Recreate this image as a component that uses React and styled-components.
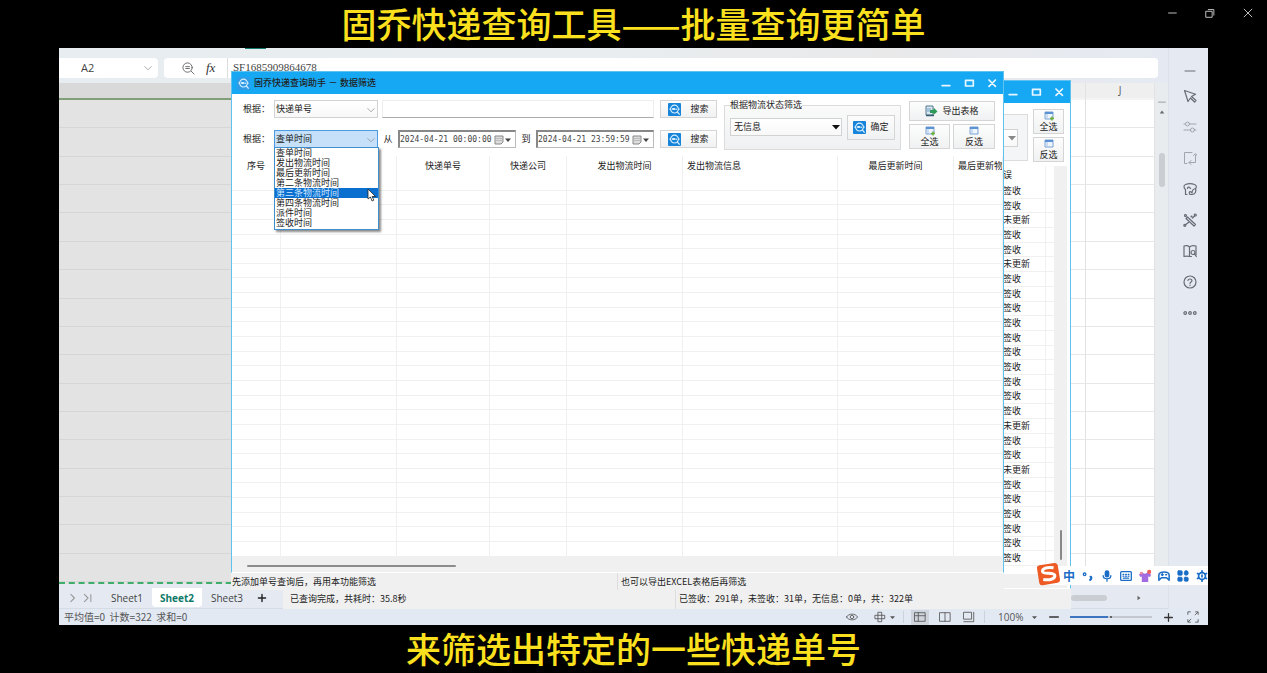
import React from "react";
import styled, { createGlobalStyle, css } from "styled-components";

const cjk = `"Liberation Sans", "Noto Sans CJK SC", sans-serif`;
const ui = `"Noto Sans CJK SC", sans-serif`;
const blue = "#16a8f3";

const GlobalStyle = createGlobalStyle`
  *, *::before, *::after { box-sizing: border-box; }
  body { margin: 0; background: #000; font-family: ${ui}; font-size: 9px; color: #222; }
  button, input, select { font: inherit; color: inherit; margin: 0; border-radius: 0; outline: none; }
  svg { display: block; flex: none; }
`;

/* ---------- player frame ---------- */
const Page = styled.main`
  display: grid;
  grid-template-rows: 48px 1fr 48px;
  min-height: 100vh;
`;
const Caption = styled.h1`
  margin: 0;
  display: flex;
  align-items: center;
  justify-content: center;
  color: #fbe01e;
  font: 500 35px/46px ${ui};
  height: 46px;
  white-space: nowrap;
`;
const PlayerTop = styled.header`
  position: relative;
`;
const PlayerControls = styled.div`
  position: absolute;
  top: 7px;
  right: 13px;
  display: flex;
  gap: 26px;
`;
const BareButton = styled.button`
  display: grid;
  place-items: center;
  width: ${(p) => p.$size || 12}px;
  height: ${(p) => p.$size || 12}px;
  padding: 0;
  border: 0;
  background: transparent;
  color: ${(p) => p.$color || "inherit"};
`;
const Stage = styled.section`
  position: relative;
  margin: 0 59px;
  overflow: hidden;
  display: flex;
  background: #e5eaf2;
`;

/* ---------- spreadsheet ---------- */
const Sheet = styled.div`
  flex: 1;
  min-width: 0;
  display: flex;
  flex-direction: column;
`;
const SheetMain = styled.div`
  flex: 1;
  display: flex;
  min-height: 0;
`;
const SheetBody = styled.div`
  flex: 1;
  min-width: 0;
  display: flex;
  flex-direction: column;
`;
const FormulaRow = styled.div`
  display: flex;
  gap: 6px;
  height: 35px;
  padding: 10px 10px 5px 0;
  background: linear-gradient(90deg, #e7edf0, #e9edef 50%, #e9e9ea 75%, #e5eaf2);
`;
const NameBox = styled.div`
  display: flex;
  align-items: center;
  width: 99px;
  padding: 0 5px 0 22px;
  background: #fff;
  border-radius: 0 4px 4px 0;
  color: #888;
  input {
    width: 70px;
    flex: 1;
    min-width: 0;
    border: 0;
    padding: 0;
    background: transparent;
    font: 11px/20px "Open Sans", sans-serif;
    color: #444;
  }
`;
const FormulaBox = styled.div`
  flex: 1;
  display: flex;
  align-items: center;
  gap: 11px;
  padding-left: 18px;
  background: #fff;
  border-radius: 4px;
  color: #666;
  input {
    flex: 1;
    align-self: stretch;
    border: 0;
    border-left: 1px solid #ddd;
    padding: 0 5px 2px;
    background: transparent;
    font: 11px/18px "Liberation Serif", serif;
    color: #444;
  }
`;
const Fx = styled.i`
  width: 10px;
  font: italic 13px/18px "Liberation Serif", serif;
  color: #333;
`;
const GreenTab = styled.span`
  position: absolute;
  top: 0;
  left: 186px;
  width: 21px;
  height: 1px;
  background: #14786a;
`;
const GridArea = styled.div`
  flex: 1;
  display: flex;
`;
const Cells = styled.div`
  flex: ${(p) => (p.$grow ? 1 : "none")};
  width: ${(p) => p.$width || "auto"};
  display: flex;
  flex-direction: column;
  background: ${(p) => (p.$selected ? "#e3e3e3" : "#fff")};
  border-right: 1px solid #e2e2e2;
  border-bottom: ${(p) => (p.$selected ? "2px dashed #3fae6c" : "2px solid #fff")};
`;
const ColumnHead = styled.div`
  height: 17px;
  font: 10px/15px "Open Sans", sans-serif;
  text-align: center;
  color: #555;
  background: ${(p) => (p.$selected ? "#d9d9d9" : "#efefef")};
  border-bottom: 2px solid ${(p) => (p.$selected ? "#7f9f78" : "#f4f4f4")};
`;
const Cell = styled.div`
  flex: 1;
  border-bottom: 1px solid ${(p) => (p.$selected ? "#d6d6d6" : "#e8e8e8")};
`;
const VScroll = styled.div`
  width: 13px;
  display: flex;
  flex-direction: column;
  align-items: center;
  padding-top: 18px;
  background: #e9ecef;
  color: #666;
`;
const Thumb = styled.span`
  width: ${(p) => p.$w}px;
  height: ${(p) => p.$h}px;
  margin-top: ${(p) => p.$mt || 0}px;
  border-radius: 3px;
  background: ${(p) => p.$color || "#cacdd2"};
`;
const TabsRow = styled.nav`
  display: flex;
  align-items: stretch;
  height: 25px;
  padding: 4px 0 1px 9px;
  border-bottom: 1px solid #d6dce5;
  background: #e5eaf2;
  color: #999;
`;
const TabArrows = styled.div`
  display: flex;
  align-items: center;
  gap: 5px;
  width: 34px;
`;
const Tab = styled.button`
  width: 50px;
  padding: 0;
  border: 0;
  border-radius: 0 0 4px 4px;
  font: ${(p) => (p.$active ? 700 : 400)} 10px/20px "Open Sans", sans-serif;
  color: ${(p) => (p.$active ? "#0f7a68" : "#444")};
  background: ${(p) => (p.$active ? "#fff" : "transparent")};
`;
const HScroll = styled.div`
  margin-left: auto;
  display: flex;
  align-items: center;
  width: 97px;
  color: #666;
  ${Thumb} { margin-right: 29px; }
`;
const SideBar = styled.aside`
  width: 40px;
  display: flex;
  flex-direction: column;
  align-items: center;
  gap: 17px;
  padding: 16px 0 0 3px;
  border-left: 1px solid #dde2ea;
  color: #666b75;
  > :first-child { margin-bottom: -6px; }
`;
const StatusBar = styled.footer`
  display: flex;
  align-items: center;
  height: 16px;
  padding-left: 5px;
  background: #e3e9f3;
  color: #555;
  font-size: 10px;
  line-height: 14px;
`;
const Summary = styled.span`
  flex: 1;
`;
const ViewButton = styled(BareButton)`
  grid-auto-flow: column;
  justify-content: center;
  gap: 4px;
  width: ${(p) => p.$w || 25}px;
  height: 15px;
`;
const ActiveView = styled(ViewButton)`
  background: #cfd4dc;
`;
const Rule = styled.span`
  width: 1px;
  height: 12px;
  margin: 0 7px;
  background: #ccd2db;
`;
const Zoom = styled.span`
  width: 26px;
  margin-left: 6px;
  font: 10px/14px "Open Sans", sans-serif;
`;
const ZoomRange = styled.input`
  appearance: none;
  width: 82px;
  height: 2px;
  margin: 0 6px;
  background: linear-gradient(90deg, #3f74c0 0 38px, #c3c8d0 38px);
  &::-webkit-slider-thumb {
    appearance: none;
    width: 2px;
    height: 2px;
    background: #444;
    border-radius: 1px;
  }
`;

/* ---------- windows ---------- */
const Window = styled.section`
  position: absolute;
  top: ${(p) => p.$top}px;
  left: ${(p) => p.$left}px;
  right: ${(p) => p.$right}px;
  bottom: ${(p) => p.$bottom}px;
  display: flex;
  flex-direction: column;
  background: #f0f0f0;
`;
const WindowFrame = styled.div`
  flex: 1;
  min-height: 0;
  display: flex;
  flex-direction: column;
  border: 1px solid #5fc2ee;
  border-bottom-color: #fff;
  background: #fff;
`;
const TitleBar = styled.header`
  flex: none;
  display: flex;
  align-items: center;
  gap: 4px;
  height: 22px;
  padding: 0 5px;
  background: ${blue};
  h2 {
    flex: 1;
    margin: 0;
    font: 500 9px/20px ${cjk};
    white-space: nowrap;
  }
`;
const TitleControls = styled.div`
  display: flex;
  gap: 11px;
  margin-left: auto;
  color: #e8f7ff;
`;
const Toolbar = styled.div`
  flex: none;
  display: flex;
  gap: 7px;
  height: 62px;
  padding: 6px 8px 0 11px;
`;
const SearchRows = styled.div`
  flex: 1;
  min-width: 0;
  display: flex;
  flex-direction: column;
  gap: 12px;
`;
const SearchRow = styled.form`
  display: flex;
  align-items: stretch;
  height: 18px;
  label { line-height: 18px; white-space: nowrap; }
`;
const RowLabel = styled.label`
  width: 31px;
`;
const SelectBox = styled.div`
  position: relative;
  width: ${(p) => p.$w}px;
  height: 18px;
  color: ${(p) => p.$arrow || "#888"};
  select {
    appearance: none;
    width: 100%;
    height: 100%;
    padding: 0 1px;
    padding-left: ${(p) => p.$pad || 1}px;
    line-height: 16px;
    color: #222;
    border: 1px solid ${(p) => (p.$open ? "#4c9be0" : "#d2d2d2")};
    background: ${(p) => (p.$open ? "#c5e0f8" : "linear-gradient(#fff, #f8f8f8)")};
  }
  > svg {
    position: absolute;
    right: 2px;
    top: 5px;
    pointer-events: none;
  }
`;
const ListBox = styled.ul`
  position: absolute;
  z-index: 3;
  top: 17px;
  left: 0;
  width: 105px;
  margin: 0;
  padding: 0 0 1px;
  list-style: none;
  color: #222;
  background: #fff;
  border: 1px solid #3f8fce;
  box-shadow: 2px 2px 2px rgba(0, 0, 0, 0.45);
`;
const ListItem = styled.li`
  height: 10px;
  line-height: 10px;
  padding-left: 1px;
  ${(p) =>
    p.$active &&
    css`
      background: #0b6fd0;
      color: #cfe8ff;
    `}
`;
const Pointer = styled.li`
  position: absolute;
  top: 40px;
  left: 92px;
`;
const TextInput = styled.input`
  flex: 1;
  min-width: 0;
  margin: 0 6px 0 4px;
  border: 1px solid #eee;
  border-bottom-color: #aaa;
  background: #fff;
`;
const Between = styled.label`
  flex: 1;
  text-align: center;
`;
const DateBox = styled.div`
  display: flex;
  align-items: center;
  gap: 1px;
  width: 118px;
  padding-right: 4px;
  color: #444;
  border: 1px solid #bbb;
  border-top: 2px solid #888;
  border-left: 2px solid #888;
  background: #fff;
  input {
    flex: 1;
    min-width: 0;
    padding: 0;
    border: 0;
    background: transparent;
    font: 8px/14px "DejaVu Sans Mono", monospace;
  }
`;
const buttonSkin = css`
  border: 1px solid #d5d5d5;
  background: linear-gradient(#fdfdfd, #f0f1f2);
  padding: 0;
`;
const PushButton = styled.button`
  ${buttonSkin}
  display: flex;
  align-items: center;
  justify-content: center;
  gap: ${(p) => p.$gap || 4}px;
  width: ${(p) => p.$w}px;
  height: ${(p) => p.$h}px;
  margin-left: ${(p) => p.$ml || 0}px;
  white-space: nowrap;
  line-height: 12px;
`;
const StackButton = styled.button`
  ${buttonSkin}
  display: flex;
  flex-direction: column;
  align-items: center;
  justify-content: center;
  width: ${(p) => p.$w}px;
  height: 25px;
  line-height: 12px;
`;
const GroupBox = styled.fieldset`
  width: ${(p) => p.$w || "auto"};
  height: 50px;
  min-width: 0;
  margin: 0;
  padding: 0 5px;
  border: 1px solid #dcdcdc;
  background: linear-gradient(#fafafa, #eff1f3);
  legend {
    height: 10px;
    padding: 0;
    line-height: 10px;
    font-size: 9px;
  }
`;
const GroupRow = styled.div`
  display: flex;
  align-items: center;
  justify-content: space-between;
  height: 34px;
`;
const Actions = styled.div`
  display: grid;
  grid-template-columns: 41px 42px;
  gap: 3px 3px;
  align-content: start;
  padding: 1px 0 0 1px;
  > :first-child { grid-column: 1 / -1; }
`;
const TableWrap = styled.div`
  flex: 1;
  min-height: 0;
  overflow: hidden;
`;
const Table = styled.table`
  width: 100%;
  height: 100%;
  table-layout: fixed;
  border-collapse: separate;
  border-spacing: 0;
  th, td {
    padding: 0 4px;
    overflow: hidden;
    white-space: nowrap;
    line-height: 12px;
    font-weight: 400;
    border-right: 1px solid #f0f0f0;
  }
  td { border-bottom: 1px solid #f0f0f0; }
  th { height: 20px; text-align: center; }
  th.left { text-align: left; }
`;
const BottomScroll = styled.div`
  flex: none;
  height: 15px;
  padding: 8px 15px 0;
  background: #f0f0f0;
`;
const WindowStatus = styled.footer`
  flex: none;
  display: flex;
  height: ${(p) => p.$h}px;
  line-height: ${(p) => p.$h}px;
  padding-left: ${(p) => p.$pad}px;
  white-space: nowrap;
  > span:first-child { width: ${(p) => p.$split}px; }
  > span + span { padding-left: 3px; border-left: 1px solid #dedede; }
`;

/* back window */
const BackTools = styled.div`
  flex: none;
  display: flex;
  gap: 5px;
  height: 63px;
  padding: 6px 6px 0 0;
`;
const BackStack = styled.div`
  display: flex;
  flex-direction: column;
  gap: 3px;
`;
const BackGroup = styled.div`
  flex: 1;
  display: flex;
  justify-content: flex-end;
  align-items: center;
  height: 47px;
  margin-top: 5px;
  padding-right: 9px;
  border: 1px solid #dcdcdc;
  background: #f4f5f6;
`;
const BackList = styled.div`
  flex: 1;
  min-height: 0;
  display: flex;
  padding-right: 3px;
`;
const BackTableWrap = styled.div`
  flex: 1;
  height: 400px;
`;
const BackTable = styled(Table)`
  th, td { text-align: left; padding: 0 0 0 1px; }
  th { height: 18px; }
`;
const BackScroll = styled.div`
  width: 12px;
  display: flex;
  justify-content: center;
  align-items: flex-end;
  padding-bottom: 14px;
  background: #f0f0f0;
`;
const BackFoot = styled.div`
  flex: none;
  height: 14px;
  margin-right: 3px;
  background: #f0f0f0;
`;

/* input method bar */
const ImeBar = styled.div`
  position: absolute;
  right: 0;
  bottom: 40px;
  display: flex;
  align-items: center;
  gap: 7px;
  height: 19px;
  padding-left: 28px;
  background: linear-gradient(90deg, transparent 12px, #fff 12px);
  color: #1a6dc6;
  > b { width: 12px; font: 700 12px/18px ${ui}; }
`;
const ImeLogo = styled.div`
  position: absolute;
  left: 1px;
  top: -5px;
`;

/* ---------- drawings ---------- */
const Svg = ({ s = 14, sw = 1, children, ...rest }) => (
  <svg width={s} height={s} viewBox="0 0 14 14" fill="none" stroke="currentColor" strokeWidth={sw} strokeLinecap="round" strokeLinejoin="round" aria-hidden="true" {...rest}>
    {children}
  </svg>
);
const Minus = () => <Svg s={12} sw={2}><path d="M2.500 10H11.500" /></Svg>;
const Square = () => <Svg s={12} sw={2}><path d="M3 4H12V10.500H3Z" /></Svg>;
const Close = () => <Svg s={12} sw={2}><path d="M3.500 3.500L11 11M11 3.500L3.500 11" /></Svg>;
const Chevron = () => <Svg s={10}><path d="M2.500 5L7 9.500L11.500 5" /></Svg>;
const Caret = ({ s = 8, up, right }) => (
  <svg width={s} height={s} viewBox="0 0 8 8" aria-hidden="true">
    <path fill="currentColor" d={up ? "M1 6L4 2L7 6Z" : right ? "M2 1L6 4L2 7Z" : "M0 2H8L4 6.500Z"} />
  </svg>
);
const SearchMark = ({ s = 13, plain }) => (
  <svg width={s} height={s} viewBox="0 0 14 14" fill="none" aria-hidden="true">
    <rect width="14" height="14" rx="1" fill={plain ? "#2d9be6" : "#1684d8"} />
    <circle cx="7" cy="6.500" r="4.200" stroke="#d8efff" strokeWidth="1.200" />
    <path d="M10 9.500L12.500 12.500M1.500 6.500H3M11 6.500H12.500" stroke="#d8efff" strokeWidth="1.400" />
    <path d="M4.500 5.500H7.500V7.500H4.500ZM8 6H9.500V7.500H8Z" fill="#d8efff" />
  </svg>
);
const ExportMark = () => (
  <svg width="13" height="12" viewBox="0 0 13 12" fill="none" aria-hidden="true">
    <path d="M1 1H8V10H1Z" fill="#dbe8f2" stroke="#55788f" />
    <path d="M2 4H6M2 6H6" stroke="#6d9fc4" />
    <path d="M5 5H8.500V2.500L12.500 6.500L8.500 10V8H5Z" fill="#2e9a57" />
    <path d="M1 10.500H9" stroke="#365c74" strokeWidth="1.500" />
  </svg>
);
const ListMark = ({ add }) => (
  <svg width="10" height="10" viewBox="0 0 10 10" fill="none" aria-hidden="true">
    <path d="M1 1H9V8H1Z" fill="#eef5fd" stroke="#7aa3d4" />
    <path d="M1 2H9" stroke="#5b93d2" strokeWidth="2" />
    <path d="M3 3V8" stroke="#a9c6e6" />
    {add && <path d="M6 7.500H10M8 5.500V9.500" stroke="#6cae3e" strokeWidth="1.500" />}
  </svg>
);
const CalendarMark = () => (
  <svg width="10" height="10" viewBox="0 0 10 10" fill="none" aria-hidden="true">
    <path d="M1 1H9V7L7 9H1Z" fill="#ddd" stroke="#888" />
    <path d="M2 3.500H8M2 5.500H8" stroke="#bbb" />
  </svg>
);

const sideIcons = [
  { name: "收起", icon: <Svg><path d="M2 7H12" /></Svg> },
  { name: "选择", icon: <Svg sw={1.2}><path d="M1.500 1.500L12.500 5.200L8.500 7.500L13 11.500L11.500 13L7.500 9L5 12.500Z" /></Svg> },
  { name: "设置", icon: <Svg color="#a0a5ae"><path d="M1 4H2.500M6.500 4H13M1 10H7.500M11.500 10H13" /><circle cx="4.500" cy="4" r="2" /><circle cx="9.500" cy="10" r="2" /></Svg> },
  { name: "裁剪", icon: <Svg color="#a0a5ae"><path d="M9 1.500H1.500V12.500H4M12.500 4V11.500H6M10.500 4.500L12.500 2.500L14 4.500M8 9.500L6 11.500L8 13.500" /></Svg> },
  { name: "素材", icon: <Svg sw={1.2}><path d="M4 12.500H2.500V7.500C0.500 6 0.500 3 2.500 2.500C5 1.500 9 1.500 11.500 2.500C13.500 3 13.500 5 13 6M4.500 6.500C4.500 5 6.500 4.500 7.500 6.500M7 12.500C5 9.500 7.500 8.500 9 11C9 8 10.500 7 12.500 6.500C13.500 10 12 12.500 9 12.500Z" /></Svg> },
  { name: "工具", icon: <Svg sw={1.2}><path d="M4.500 4L12.500 11.500L11 13L3 5.500ZM2 12L5.500 9.500M9.500 5L11.500 3" /><circle cx="2.500" cy="2.500" r="1" /><circle cx="12.300" cy="2" r="1" /><circle cx="1.800" cy="12.300" r="1" /><circle cx="8.500" cy="3.500" r="0.500" /></Svg> },
  { name: "查阅", icon: <Svg sw={1.2}><path d="M6.500 3C5 1.500 3 1.500 1 2V12.500C3 12 5 12 6.500 12.500V3C8 1.500 11 1.500 13 2V11M6.500 12.500H8.500" /><circle cx="10" cy="8.500" r="2" /><path d="M11.500 10L13.300 12.500" /></Svg> },
  { name: "帮助", icon: <Svg sw={1.2}><circle cx="7" cy="7" r="6" /><path d="M5 5.500C5 3.500 9 3.500 9 5.500C9 7 7 7 7 8.500M7 10.200V10.400" /></Svg> },
  { name: "更多", icon: <Svg sw={1.2}><circle cx="2.200" cy="7" r="1.300" /><circle cx="7" cy="7" r="1.300" /><circle cx="11.800" cy="7" r="1.300" /></Svg> },
];

const timeOptions = ["查单时间", "发出物流时间", "最后更新时间", "第二条物流时间", "第三条物流时间", "第四条物流时间", "派件时间", "签收时间"];
const columns = [
  { w: 49, text: "序号" },
  { w: 116, text: "" },
  { w: 93, text: "快递单号" },
  { w: 77, text: "快递公司" },
  { w: 116, text: "发出物流时间" },
  { w: 155, text: "发出物流信息", left: true },
  { w: 116, text: "最后更新时间" },
  { text: "最后更新物", left: true },
];
const pending = [2, 5, 16, 19];
const range = (n) => Array.from({ length: n }, (_, i) => i);

const Controls = () => (
  <TitleControls>
    <BareButton aria-label="最小化"><Minus /></BareButton>
    <BareButton aria-label="最大化"><Square /></BareButton>
    <BareButton aria-label="关闭"><Close /></BareButton>
  </TitleControls>
);

function Spreadsheet() {
  return (
    <Sheet>
      <SheetMain>
        <SheetBody>
          <FormulaRow>
            <NameBox>
              <input aria-label="名称框" defaultValue="A2" />
              <Chevron />
            </NameBox>
            <FormulaBox>
              <Svg s={13}><circle cx="6" cy="6" r="5" /><path d="M10 10L13 13M4 5H8M4 7H8" /></Svg>
              <Fx>fx</Fx>
              <input aria-label="编辑栏" defaultValue="SF1685909864678" />
            </FormulaBox>
          </FormulaRow>
          <GridArea>
            <Cells $selected $width="212px">
              <ColumnHead $selected />
              {range(17).map((i) => <Cell key={i} $selected />)}
            </Cells>
            <Cells $grow>
              <ColumnHead />
              {range(17).map((i) => <Cell key={i} />)}
            </Cells>
            <Cells $width="69px">
              <ColumnHead>J</ColumnHead>
              {range(17).map((i) => <Cell key={i} />)}
            </Cells>
            <VScroll>
              <Svg s={8}><path d="M1 2H13" /></Svg>
              <Caret s={6} up />
              <Thumb $w={6} $h={34} $mt={38} />
            </VScroll>
          </GridArea>
          <TabsRow>
            <TabArrows>
              <Svg s={10} sw={1.5}><path d="M4 2L9 7L4 12" /></Svg>
              <Svg s={10} sw={1.5}><path d="M2 2L7 7L2 12M11 2V12" /></Svg>
            </TabArrows>
            <Tab>Sheet1</Tab>
            <Tab $active>Sheet2</Tab>
            <Tab>Sheet3</Tab>
            <BareButton aria-label="新建工作表" $size={20} $color="#222"><Svg s={10} sw={2}><path d="M2 7H12M7 2V12" /></Svg></BareButton>
            <HScroll>
              <Thumb $w={36} $h={6} />
              <Caret s={6} right />
            </HScroll>
          </TabsRow>
        </SheetBody>
        <SideBar>
          {sideIcons.map(({ name, icon }) => (
            <BareButton key={name} $size={14} aria-label={name}>{icon}</BareButton>
          ))}
        </SideBar>
      </SheetMain>
      <StatusBar>
        <Summary>平均值=0&nbsp; 计数=322&nbsp; 求和=0</Summary>
        <ViewButton aria-label="护眼模式" $w={40}><Svg s={12}><path d="M0.500 7C3 2.500 11 2.500 13.500 7C11 11.500 3 11.500 0.500 7Z" /><circle cx="7" cy="7" r="2" /></Svg></ViewButton>
        <ViewButton aria-label="阅读模式" $w={24}>
          <Svg s={12}><path d="M5 1.500H9V12.500H5ZM1.500 5H12.500V9H1.500Z" /></Svg>
          <Caret s={5} />
        </ViewButton>
        <Rule />
        <ActiveView $w={18} aria-label="普通视图"><Svg s={12}><path d="M1 2H13V12H1ZM1 5.500H13M5 2V12" /></Svg></ActiveView>
        <ViewButton aria-label="分页预览" $w={32}><Svg s={12}><path d="M1 2H13V12H1ZM7 2V12" /></Svg></ViewButton>
        <ViewButton aria-label="页面布局" $w={16}><Svg s={12}><path d="M1 1.500H10V9.500H1ZM12.500 1.500V12.500H1" /></Svg></ViewButton>
        <Rule />
        <Zoom>100%</Zoom>
        <ViewButton aria-label="缩放比例" $w={20}><Caret s={5} /></ViewButton>
        <ViewButton aria-label="缩小" $w={20} $color="#333"><Svg s={10} sw={2}><path d="M1 7H13" /></Svg></ViewButton>
        <ZoomRange type="range" aria-label="缩放" defaultValue="50" />
        <ViewButton aria-label="放大" $w={20} $color="#333"><Svg s={9} sw={2}><path d="M1 7H13M7 1V13" /></Svg></ViewButton>
        <ViewButton aria-label="全屏" $w={30}><Svg s={12}><path d="M4 1H1V4M10 1H13V4M1 10V13H4M13 10V13H10M9.500 4.500L12.500 1.500M4.500 9.500L1.500 12.500" /></Svg></ViewButton>
      </StatusBar>
    </Sheet>
  );
}

function ResultWindow() {
  return (
    <Window $top={32} $left={224} $right={137} $bottom={16}>
      <WindowFrame>
        <TitleBar><Controls /></TitleBar>
        <BackTools>
          <BackGroup>
            <SelectBox $w={60}>
              <select aria-label="状态"><option /></select>
              <Caret />
            </SelectBox>
          </BackGroup>
          <BackStack>
            <StackButton $w={31}><ListMark add />全选</StackButton>
            <StackButton $w={31}><ListMark />反选</StackButton>
          </BackStack>
        </BackTools>
        <BackList>
          <BackTableWrap>
            <BackTable>
              <colgroup><col /><col width="44" /><col width="9" /></colgroup>
              <thead><tr><th /><th>误</th><th /></tr></thead>
              <tbody>
                {range(26).map((i) => (
                  <tr key={i}><td /><td>{pending.includes(i) ? "未更新" : "签收"}</td><td /></tr>
                ))}
              </tbody>
            </BackTable>
          </BackTableWrap>
          <BackScroll><Thumb $w={2} $h={30} $color="#888" /></BackScroll>
        </BackList>
        <BackFoot />
      </WindowFrame>
      <WindowStatus $h={20} $pad={7} $split={385}>
        <span>已查询完成，共耗时：35.8秒</span>
        <span>已签收：291单，未签收：31单，无信息：0单，共：322单</span>
      </WindowStatus>
    </Window>
  );
}

function FilterWindow() {
  return (
    <Window $top={23} $left={172} $right={204} $bottom={35}>
      <WindowFrame>
        <TitleBar>
          <SearchMark plain />
          <h2>固乔快递查询助手 － 数据筛选</h2>
          <Controls />
        </TitleBar>
        <Toolbar>
          <SearchRows>
            <SearchRow>
              <RowLabel htmlFor="field">根据：</RowLabel>
              <SelectBox $w={104}>
                <select id="field"><option>快递单号</option></select>
                <Chevron />
              </SelectBox>
              <TextInput aria-label="关键字" />
              <PushButton type="button" $w={57} $gap={9}><SearchMark />搜索</PushButton>
            </SearchRow>
            <SearchRow>
              <RowLabel htmlFor="time">根据：</RowLabel>
              <SelectBox $w={104} $open>
                <select id="time">{timeOptions.map((t) => <option key={t}>{t}</option>)}</select>
                <Chevron />
                <ListBox role="listbox" aria-label="时间类型">
                  {timeOptions.map((t, i) => (
                    <ListItem key={t} role="option" aria-selected={i === 4} $active={i === 4}>{t}</ListItem>
                  ))}
                  <Pointer role="presentation">
                    <svg width="9" height="14" viewBox="0 0 9 14" aria-hidden="true">
                      <path d="M1 1V11L3.500 9L5 13L6.800 12.200L5.200 8.500H8.500Z" fill="#fff" stroke="#222" strokeWidth="0.800" />
                    </svg>
                  </Pointer>
                </ListBox>
              </SelectBox>
              <Between htmlFor="from">从</Between>
              <DateBox>
                <input id="from" defaultValue="2024-04-21 00:00:00" />
                <CalendarMark /><Caret s={6} />
              </DateBox>
              <Between htmlFor="to">到</Between>
              <DateBox>
                <input id="to" defaultValue="2024-04-21 23:59:59" />
                <CalendarMark /><Caret s={6} />
              </DateBox>
              <PushButton type="button" $w={57} $gap={9} $ml={6}><SearchMark />搜索</PushButton>
            </SearchRow>
          </SearchRows>
          <GroupBox $w="177px">
            <legend>根据物流状态筛选</legend>
            <GroupRow>
              <SelectBox $w={112} $pad={3} $arrow="#111">
                <select aria-label="物流状态"><option>无信息</option></select>
                <Caret />
              </SelectBox>
              <PushButton $w={48} $h={25}><SearchMark />确定</PushButton>
            </GroupRow>
          </GroupBox>
          <Actions>
            <PushButton $w={86} $h={20}><ExportMark />导出表格</PushButton>
            <StackButton $w={41}><ListMark add />全选</StackButton>
            <StackButton $w={42}><ListMark />反选</StackButton>
          </Actions>
        </Toolbar>
        <TableWrap>
          <Table>
            <colgroup>{columns.map((c, i) => <col key={i} width={c.w} />)}</colgroup>
            <thead>
              <tr>{columns.map((c, i) => <th key={i} className={c.left ? "left" : ""}>{c.text}</th>)}</tr>
            </thead>
            <tbody>
              {range(26).map((r) => <tr key={r}>{columns.map((c, i) => <td key={i} />)}</tr>)}
            </tbody>
          </Table>
        </TableWrap>
        <BottomScroll><Thumb as="div" $w={209} $h={2} $color="#8c8c8c" /></BottomScroll>
      </WindowFrame>
      <WindowStatus $h={17} $pad={1} $split={385}>
        <span>先添加单号查询后，再用本功能筛选</span>
        <span>也可以导出EXCEL表格后再筛选</span>
      </WindowStatus>
    </Window>
  );
}

function InputMethod() {
  return (
    <ImeBar>
      <ImeLogo>
        <svg width="26" height="26" viewBox="0 0 26 26" fill="none" aria-hidden="true">
          <g transform="rotate(-9 13 13)">
            <rect x="2" y="3" width="21" height="20" rx="3" fill="#ee5a24" />
            <path d="M18.500 7.500C12 5.500 7 6.500 7 9.500C7 13 18.500 11.500 18.500 15.500C18.500 19 12 19.500 6.500 17.500" stroke="#fff" strokeWidth="3" />
          </g>
        </svg>
      </ImeLogo>
      <b>中</b>
      <Svg s={12}><circle cx="3" cy="5" r="1.500" strokeWidth="1.500" /><path d="M10 8C11.500 8 11 10.500 9.500 11.500" strokeWidth="2.500" /></Svg>
      <Svg s={12} sw={1.5}><rect x="5" y="1" width="4" height="7" rx="2" fill="currentColor" /><path d="M2.500 6.500C2.500 11.500 11.500 11.500 11.500 6.500M7 10.500V13" /></Svg>
      <Svg s={12} sw={1.5}><rect x="0.800" y="2" width="12.400" height="10" rx="1" /><path d="M3.500 5H4.500M6.500 5H7.500M9.500 5H10.500M3.500 7.200H4.500M6.500 7.200H7.500M9.500 7.200H10.500M4 9.500H10" /></Svg>
      <svg width="12" height="14" viewBox="0 0 13 14" aria-hidden="true">
        <path d="M3.500 3L0 5.500L1.500 8L3 7.500V13.500H10V7.500L12 8L13 5.500L9 3C8 5 5 5 3.500 3Z" fill="#a26be0" />
        <circle cx="11" cy="2.500" r="2.300" fill="#f0605a" />
        <circle cx="2.500" cy="4" r="1.500" fill="#f08aa0" />
      </svg>
      <Svg s={12} sw={1.8}><path d="M1 12V6C1 1 13 1 13 6V12L10 9H4ZM4 5.500H6M5 4.500V6.500M9 5.500H10" /></Svg>
      <Svg s={12}><g fill="currentColor"><rect x="1" y="1" width="5" height="5" rx="1" /><rect x="8.500" y="1" width="4.500" height="5" rx="2" /><rect x="1" y="8.500" width="5" height="4.500" rx="1" /><rect x="8.500" y="8.500" width="4.500" height="4.500" rx="1" /></g></Svg>
      <Svg s={12} sw={2}><circle cx="7" cy="7" r="4" /><path d="M7 1V2.500M7 11.500V13M1.800 4L3 4.700M11 9.300L12.200 10M1.800 10L3 9.300M11 4.700L12.200 4M7 6V8" /></Svg>
    </ImeBar>
  );
}

export default function App() {
  return (
    <Page>
      <GlobalStyle />
      <PlayerTop>
        <Caption>固乔快递查询工具——批量查询更简单</Caption>
        <PlayerControls>
          <BareButton $color="#ddd" aria-label="最小化"><Svg s={12}><path d="M3 7H12" /></Svg></BareButton>
          <BareButton $color="#ddd" aria-label="还原"><Svg s={12}><path d="M2.500 5H9.500V12H2.500ZM5 3H11.500V9.500" /></Svg></BareButton>
          <BareButton $color="#ddd" aria-label="关闭"><Svg s={12}><path d="M2.500 2.500L11.500 11.500M11.500 2.500L2.500 11.500" /></Svg></BareButton>
        </PlayerControls>
      </PlayerTop>
      <Stage>
        <Spreadsheet />
        <GreenTab />
        <ResultWindow />
        <FilterWindow />
        <InputMethod />
      </Stage>
      <Caption as="p">来筛选出特定的一些快递单号</Caption>
    </Page>
  );
}
